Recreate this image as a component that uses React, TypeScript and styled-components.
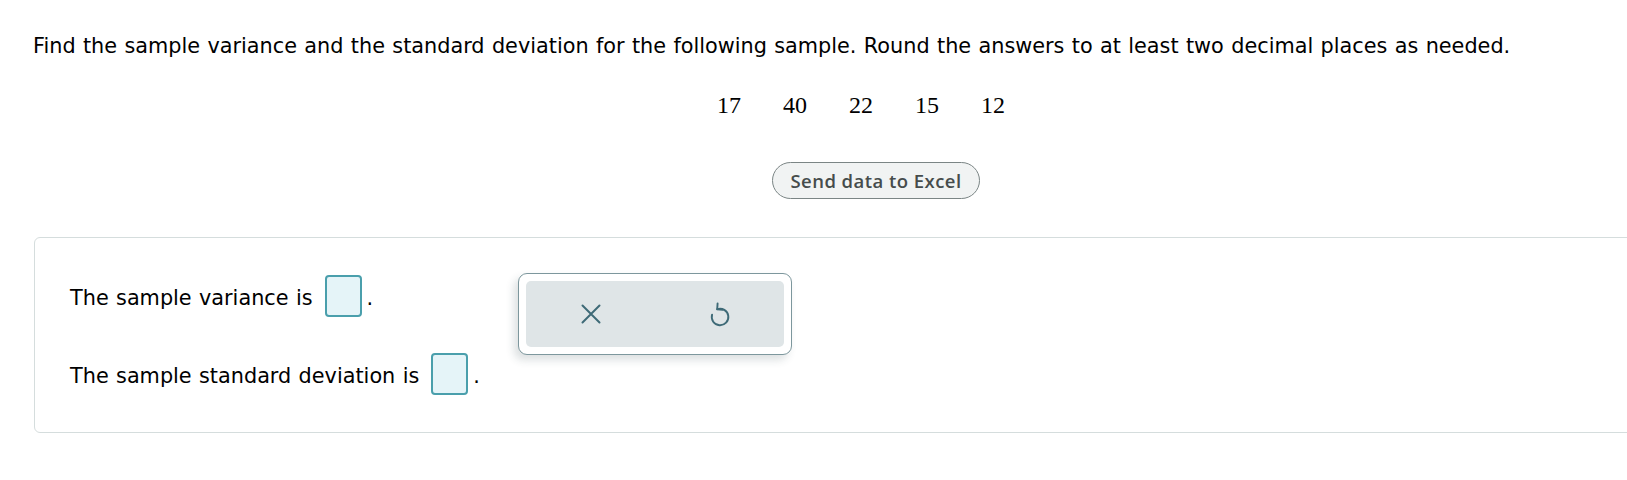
import React from "react"
import styled, { createGlobalStyle } from "styled-components"

const GlobalStyle = createGlobalStyle`
  html, body {
    margin: 0;
    padding: 0;
    background: #ffffff;
    overflow: hidden;
  }
  body {
    font-family: "DejaVu Sans", Verdana, sans-serif;
    color: #000000;
  }
`

const Page = styled.div`
  padding: 31px 0 0 33px;
`

const Content = styled.div`
  width: 1656px;
`

const Question = styled.p`
  margin: 0;
  font-size: 20.8px;
  line-height: 31px;
  word-spacing: 0.75px;
`

const DataRow = styled.div`
  display: flex;
  justify-content: center;
  gap: 42px;
  margin-top: 29px;
  font-family: "Liberation Serif", "Times New Roman", serif;
  font-size: 24px;
  line-height: 28px;
`

const ButtonRow = styled.div`
  display: flex;
  justify-content: center;
  padding-left: 30px;
  margin-top: 43px;
`

const ExcelButton = styled.button`
  box-sizing: border-box;
  width: 208px;
  height: 37px;
  border: 1px solid #7b8585;
  border-radius: 19px;
  background: #f1f3f3;
  color: #464c4c;
  font-family: "Open Sans", Lato, sans-serif;
  font-weight: 600;
  font-size: 18.5px;
  letter-spacing: 0.45px;
  padding: 0;
  cursor: pointer;
`

const Card = styled.div`
  position: relative;
  margin: 38px 0 0 1px;
  border: 1px solid #d5dddd;
  border-radius: 6px;
  padding: 37px 0 37px 35px;
  display: flex;
  flex-direction: column;
  gap: 36px;
`

const AnswerRow = styled.div`
  display: flex;
  align-items: center;
  height: 42px;
  font-size: 20.8px;
  word-spacing: 0.75px;
`

const Label = styled.span`
  padding-top: 4px;
`

const AnswerBox = styled.span`
  box-sizing: border-box;
  width: 37px;
  height: 42px;
  margin-left: 12px;
  border: 2px solid #4a9fac;
  border-radius: 4px;
  background: #e5f4f8;
`

const Period = styled.span`
  margin-left: 5px;
  padding-top: 4px;
`

const Palette = styled.div`
  position: absolute;
  left: 483px;
  top: 35px;
  box-sizing: border-box;
  width: 274px;
  height: 82px;
  padding: 7px;
  background: #ffffff;
  border: 1px solid #7d979d;
  border-radius: 9px;
  box-shadow: -4px 5px 9px rgba(40, 60, 70, 0.16);
`

const PaletteInner = styled.div`
  height: 100%;
  display: grid;
  grid-template-columns: 1fr 1fr;
  background: #dfe5e7;
  border-radius: 5px;
`

const ToolButton = styled.button`
  display: flex;
  align-items: center;
  justify-content: center;
  background: transparent;
  border: 0;
  padding: 0;
  color: #3e6a77;
  cursor: pointer;
`

const values = [17, 40, 22, 15, 12]

const CloseIcon = () => (
  <svg width="20" height="20" viewBox="0 0 20 20" fill="none">
    <path d="M1.5 1.5 L18.5 18.5 M18.5 1.5 L1.5 18.5" stroke="currentColor" strokeWidth="2" strokeLinecap="round" />
  </svg>
)

const UndoIcon = () => (
  <svg width="22" height="28" viewBox="0 0 22 28" fill="none">
    <path
      d="M8.2 9.2 A8.3 8.3 0 1 1 3.1 14.6"
      stroke="currentColor"
      strokeWidth="1.9"
      strokeLinecap="round"
    />
    <path
      d="M8.6 3.4 L8.2 9.2 L13.8 9.9"
      stroke="currentColor"
      strokeWidth="1.9"
      strokeLinecap="round"
      strokeLinejoin="round"
    />
  </svg>
)

const App: React.FC = () => {
  return (
    <Page>
      <GlobalStyle />
      <Content>
        <Question>
          Find the sample variance and the standard deviation for the following sample. Round the answers to at least two decimal places as needed.
        </Question>
        <DataRow>
          {values.map((v, i) => (
            <span key={i}>{v}</span>
          ))}
        </DataRow>
        <ButtonRow>
          <ExcelButton>Send data to Excel</ExcelButton>
        </ButtonRow>
        <Card>
          <AnswerRow>
            <Label>The sample variance is</Label>
            <AnswerBox />
            <Period>.</Period>
          </AnswerRow>
          <AnswerRow>
            <Label>The sample standard deviation is</Label>
            <AnswerBox />
            <Period>.</Period>
          </AnswerRow>
          <Palette>
            <PaletteInner>
              <ToolButton aria-label="Clear">
                <CloseIcon />
              </ToolButton>
              <ToolButton aria-label="Undo">
                <UndoIcon />
              </ToolButton>
            </PaletteInner>
          </Palette>
        </Card>
      </Content>
    </Page>
  )
}

export default App
